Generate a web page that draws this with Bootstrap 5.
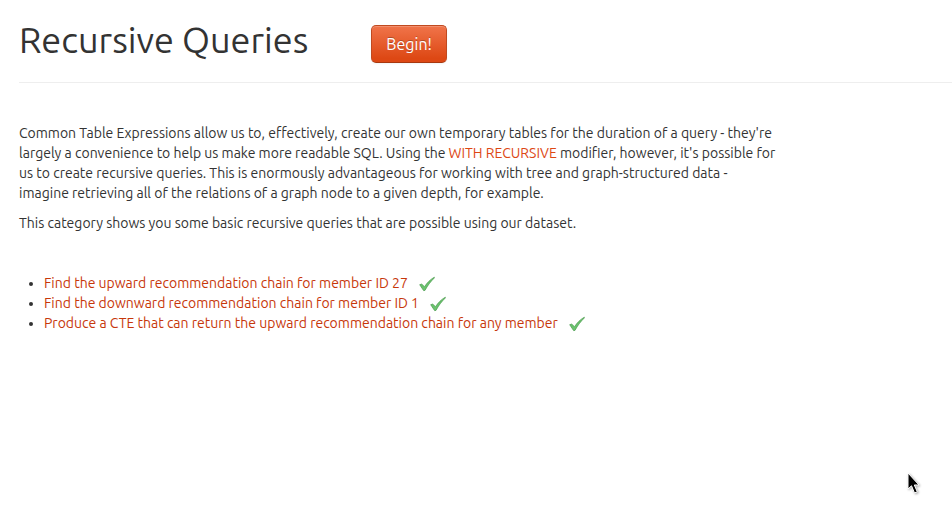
<!DOCTYPE html>
<html lang="en">
<head>
<meta charset="utf-8">
<meta name="viewport" content="width=device-width, initial-scale=1">
<title>Recursive Queries</title>
<link href="https://cdn.jsdelivr.net/npm/bootstrap@5.3.0/dist/css/bootstrap.min.css" rel="stylesheet">
<style>
  body { font-family: Ubuntu, "Noto Sans", sans-serif; font-size: 14px; line-height: 20px; color: #333; background: #fff; }
  main { padding: 20px 0 20px 19px; }
  .page-title { font-size: 36px; line-height: 40px; font-weight: 400; }
  .title-bar { gap: 63px; padding-bottom: 19px; border-bottom: 1px solid #eee; margin-bottom: 40px; }
  .btn-begin {
    margin-top: 5px; padding: 8px 14px; font-size: 16px; line-height: 20px; border-radius: 5px;
    color: #fff; text-shadow: 0 -1px 0 rgba(0,0,0,.25);
    background: linear-gradient(#f0744a, #dd4814 90%);
    border: 1px solid #c04a20; border-bottom-color: #a8380f;
    box-shadow: inset 0 1px 0 rgba(255,255,255,.2), 0 1px 2px rgba(0,0,0,.05);
  }
  .btn-begin:hover { color: #fff; background: #dd4814; }
  .intro { max-width: 760px; }
  .intro p { margin-bottom: 10px; }
  .intro a { color: #dd4814; }
  .exercises { margin-top: 40px; padding-left: 25px; }
  .exercises a { color: #c7370a; }
  .tick { width: 16px; height: 16px; margin-left: 8px; vertical-align: -4px; }
  .pointer { right: 32px; top: 471px; width: 14px; height: 24px; filter: drop-shadow(1px 1px 1px rgba(0,0,0,.35)); }
</style>
<script src="https://cdn.jsdelivr.net/npm/bootstrap@5.3.0/dist/js/bootstrap.bundle.min.js" defer></script>
</head>
<body>
<svg class="d-none" aria-hidden="true">
  <symbol id="tick" viewBox="0 0 16 16">
    <path d="M.7 8.700 2.700 8.100 5.500 10.700C8.200 6.600 11.200 3.600 15.300 1.200L15.500 1.800C11.500 5.600 8.500 9.700 6 14.400L4.600 14.600Z" fill="#6cc46f" stroke="#489a4c" stroke-width=".7" stroke-linejoin="round"/>
  </symbol>
</svg>
<main>
  <header class="title-bar d-flex align-items-start">
    <h1 class="page-title mb-0">Recursive Queries</h1>
    <button type="button" class="btn btn-begin">Begin!</button>
  </header>
  <section class="intro">
    <p>Common Table Expressions allow us to, effectively, create our own temporary tables for the duration of a query - they're largely a convenience to help us make more readable SQL. Using the <a class="text-decoration-none" href="#with">WITH RECURSIVE</a> modifier, however, it's possible for us to create recursive queries. This is enormously advantageous for working with tree and graph-structured data - imagine retrieving all of the relations of a graph node to a given depth, for example.</p>
    <p>This category shows you some basic recursive queries that are possible using our dataset.</p>
  </section>
  <ul class="exercises mb-0">
    <li><a class="text-decoration-none" href="#upward">Find the upward recommendation chain for member ID 27</a> <svg class="tick" role="img" aria-label="Completed"><use href="#tick"/></svg></li>
    <li><a class="text-decoration-none" href="#downward">Find the downward recommendation chain for member ID 1</a> <svg class="tick" role="img" aria-label="Completed"><use href="#tick"/></svg></li>
    <li><a class="text-decoration-none" href="#cte">Produce a CTE that can return the upward recommendation chain for any member</a> <svg class="tick" role="img" aria-label="Completed"><use href="#tick"/></svg></li>
  </ul>
</main>
<svg class="pointer position-absolute" viewBox="0 0 14 24" aria-hidden="true">
  <path d="M2 2v16l3.500-3.200 3 7.200 2.800-1.200-3-6.800H13Z" fill="#000" stroke="#fff" stroke-width="1"/>
</svg>
</body>
</html>
